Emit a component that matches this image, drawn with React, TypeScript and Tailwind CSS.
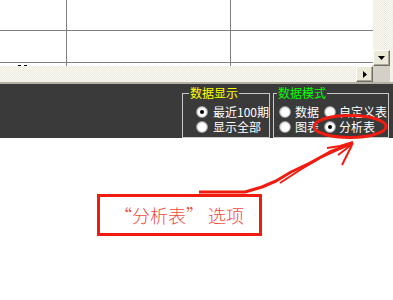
import React from 'react';

const checker =
  'bg-[repeating-conic-gradient(#ebe9dc_0_25%,#fbfaf4_0_50%)] bg-[length:2px_2px]';

function ScrollButton({ dir }: { dir: 'down' | 'right' }) {
  return (
    <div className="w-[17px] h-[16px] bg-[#ece9d8] border border-t-white border-l-white border-r-[#716f64] border-b-[#716f64] flex items-center justify-center shadow-[inset_-1px_-1px_0_#aca899]">
      {dir === 'down' ? (
        <svg width="7" height="4" viewBox="0 0 7 4">
          <path d="M0 0h7L3.5 4z" fill="#000" />
        </svg>
      ) : (
        <svg width="4" height="7" viewBox="0 0 4 7">
          <path d="M0 0v7L4 3.5z" fill="#000" />
        </svg>
      )}
    </div>
  );
}

function Radio({ checked }: { checked?: boolean }) {
  return (
    <span className="w-[12px] h-[12px] shrink-0 rounded-full border border-[#9a9a9a] bg-[radial-gradient(circle_at_55%_55%,#ffffff_45%,#c4c4c4_100%)] flex items-center justify-center">
      {checked && <span className="w-[4px] h-[4px] rounded-full bg-black" />}
    </span>
  );
}

function Option({ label, checked, gap = 'gap-[5px]' }: { label: string; checked?: boolean; gap?: string }) {
  return (
    <div className={`flex items-center h-[15px] ${gap}`}>
      <Radio checked={checked} />
      <span className="text-[12px] leading-[12px] text-white whitespace-nowrap">{label}</span>
    </div>
  );
}

export default function App() {
  return (
    <div
      className="relative w-[393px] h-[300px] bg-white overflow-hidden"
      style={{ fontFamily: '"Noto Sans CJK SC", "Liberation Sans", sans-serif' }}
    >
      {/* table + scrollbars */}
      <div className="flex h-[82px]">
        <div className="w-[373px] flex flex-col">
          <div className="h-[66px] overflow-hidden grid grid-cols-[67px_164px_142px] grid-rows-[31px_32px_3px]">
            <div className="border-r border-b border-[#808080]" />
            <div className="border-r border-b border-[#808080]" />
            <div className="border-b border-[#808080]" />
            <div className="border-r border-b border-[#808080]" />
            <div className="border-r border-b border-[#808080]" />
            <div className="border-b border-[#808080]" />
            <div className="border-r border-[#808080] flex gap-[3px] pl-[18px] pt-[2px]">
              <span className="w-[3px] h-[1px] bg-black" />
              <span className="w-[3px] h-[1px] bg-black" />
            </div>
            <div className="border-r border-[#808080]" />
            <div />
          </div>
          <div className="flex h-[16px]">
            <div className={`flex-1 ${checker}`} />
            <ScrollButton dir="right" />
          </div>
        </div>
        <div className="w-[17px] flex flex-col">
          <div className={`h-[50px] ${checker}`} />
          <ScrollButton dir="down" />
          <div className="h-[16px] bg-[#d4d0c8]" />
        </div>
        <div className={`flex-1 ${checker}`} />
      </div>
      <div className="h-[2px] bg-[#b3b1a3]" />

      {/* dark options band */}
      <div className="h-[54px] bg-[#3a3a3a] flex pt-[3px] pl-[182px] gap-[3px]">
        <fieldset className="w-[88px] h-[51px] border border-[#c8c8c8] p-0 m-0">
          <legend className="ml-[6px] px-[1px] text-[12px] leading-[12px] text-[#ffff00]">数据显示</legend>
          <div className="pl-[13px] pt-[5px]">
            <Option label="最近100期" checked />
            <Option label="显示全部" />
          </div>
        </fieldset>
        <fieldset className="w-[116px] h-[51px] border border-[#c8c8c8] p-0 m-0">
          <legend className="ml-[3px] px-[1px] text-[12px] leading-[12px] text-[#00ff00]">数据模式</legend>
          <div className="grid grid-cols-[45px_1fr] pl-[5px] pt-[5px]">
            <Option label="数据" gap="gap-[4px]" />
            <Option label="自定义表" gap="gap-[3px]" />
            <Option label="图表" gap="gap-[4px]" />
            <Option label="分析表" checked gap="gap-[3px]" />
          </div>
        </fieldset>
      </div>

      {/* callout */}
      <div className="mt-[56px] ml-[97px] w-[165px] h-[42px] border-[3px] border-[#f01c10] flex items-center pl-[14px]">
        <span className="text-[18px] leading-[20px] font-light text-[#f04a40]">“分析表” 选项</span>
      </div>

      {/* red annotation strokes */}
      <svg className="absolute inset-0 pointer-events-none" width="393" height="300" viewBox="0 0 393 300">
        <ellipse cx="350" cy="126.5" rx="36" ry="11" fill="none" stroke="#f01c10" strokeWidth="3" />
        <g fill="none" stroke="#f01c10" strokeWidth="2" strokeLinejoin="bevel">
          <polyline points="199,192 245,192 262,187 276,181 291,172 310,163 330,152 353,143" strokeWidth="3" />
          <polyline points="327,148 340,146 353,142" />
          <polyline points="338,155 346,149 353,143" />
          <polyline points="342,165 347,155 352,145" />
          <polyline points="280,183 300,170 322,157 350,144" />
        </g>
      </svg>
    </div>
  );
}
